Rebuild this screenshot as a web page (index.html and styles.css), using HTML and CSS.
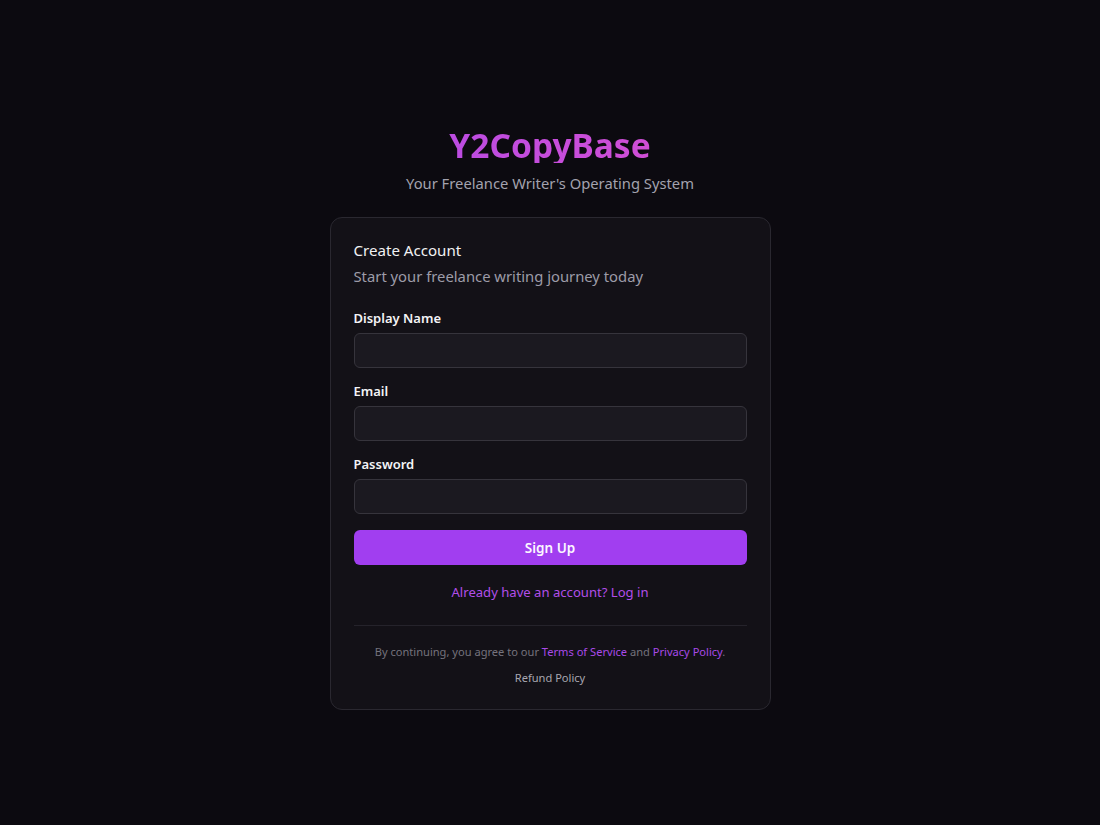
FILE: index.html
```html
<!DOCTYPE html>
<html lang="en">
<head>
<meta charset="utf-8">
<title>Y2CopyBase – Create Account</title>
<link rel="stylesheet" href="styles.css">
</head>
<body>
<main class="page">
  <div class="wrap">
    <header class="brand">
      <h1 class="logo">Y2CopyBase</h1>
      <p class="tagline">Your Freelance Writer's Operating System</p>
    </header>
    <section class="card">
      <div class="card-head">
        <h2 class="card-title">Create Account</h2>
        <p class="card-desc">Start your freelance writing journey today</p>
      </div>
      <form class="form">
        <div class="field">
          <label class="label" for="name">Display Name</label>
          <input class="input" id="name" type="text">
        </div>
        <div class="field">
          <label class="label" for="email">Email</label>
          <input class="input" id="email" type="email">
        </div>
        <div class="field">
          <label class="label" for="pw">Password</label>
          <input class="input" id="pw" type="password">
        </div>
        <button class="btn" type="button">Sign Up</button>
      </form>
      <p class="switch"><a href="#">Already have an account? Log in</a></p>
      <div class="legal">
        <p class="legal-line">By continuing, you agree to our <a href="#">Terms of Service</a> and <a href="#">Privacy Policy</a>.</p>
        <p class="legal-line"><a href="#" class="refund">Refund Policy</a></p>
      </div>
    </section>
  </div>
</main>
</body>
</html>
```
FILE: styles.css
```css
* { box-sizing: border-box; }
html, body { margin: 0; padding: 0; }
body {
  background: #0c0a10;
  color: #f2f2f4;
  font-family: "Noto Sans", "Open Sans", sans-serif;
  min-height: 100vh;
}
.page {
  min-height: 100vh;
  display: flex;
  align-items: center;
  justify-content: center;
}
.wrap {
  width: 441px;
  display: flex;
  flex-direction: column;
  margin-top: 12px;
}
.brand { text-align: center; margin-bottom: 24px; }
.logo {
  margin: 0;
  font-size: 33.5px;
  line-height: 36px;
  font-weight: 700;
  background: linear-gradient(90deg, #b04ae8, #dc50cf);
  -webkit-background-clip: text;
  background-clip: text;
  color: transparent;
}
.tagline {
  margin: 10px 0 0;
  font-size: 14.75px;
  line-height: 20px;
  color: #a3a2ae;
}
.card {
  background: #131117;
  border: 1px solid #2a2830;
  border-radius: 12px;
  padding: 20px 23px 23px;
}
.card-head { display: flex; flex-direction: column; gap: 2px; margin-bottom: 21px; }
.card-title {
  margin: 0;
  font-size: 15.1px;
  line-height: 24px;
  font-weight: 400;
  color: #f1f1f3;
}
.card-desc {
  margin: 0;
  font-size: 14.8px;
  line-height: 24px;
  color: #9d9ca8;
}
.form { display: flex; flex-direction: column; gap: 14px; }
.field { display: flex; flex-direction: column; gap: 6px; }
.label {
  font-size: 13px;
  line-height: 18px;
  font-weight: 600;
  color: #f4f4f6;
}
.input {
  height: 35px;
  width: 100%;
  background: #1b1920;
  border: 1px solid #36343c;
  border-radius: 6px;
  color: #f2f2f4;
  font: inherit;
  font-size: 14px;
  padding: 0 12px;
  outline: none;
}
.btn {
  margin-top: 2px;
  height: 35px;
  width: 100%;
  border: none;
  border-radius: 6px;
  background: #a13ef0;
  color: #fbf7ff;
  font-family: inherit;
  font-size: 13.5px;
  font-weight: 600;
}
.switch {
  margin: 17px 0 0;
  text-align: center;
  font-size: 13.1px;
  line-height: 20px;
}
.switch a { color: #b24ee9; text-decoration: none; }
.legal {
  margin-top: 23px;
  border-top: 1px solid #25232b;
  padding-top: 18px;
  text-align: center;
}
.legal-line {
  margin: 0;
  font-size: 11.1px;
  line-height: 16px;
  color: #75737d;
}
.legal-line + .legal-line { margin-top: 10px; }
.legal-line a { color: #a94ae8; text-decoration: none; }
.legal-line a.refund { color: #a8a7b0; }
```
